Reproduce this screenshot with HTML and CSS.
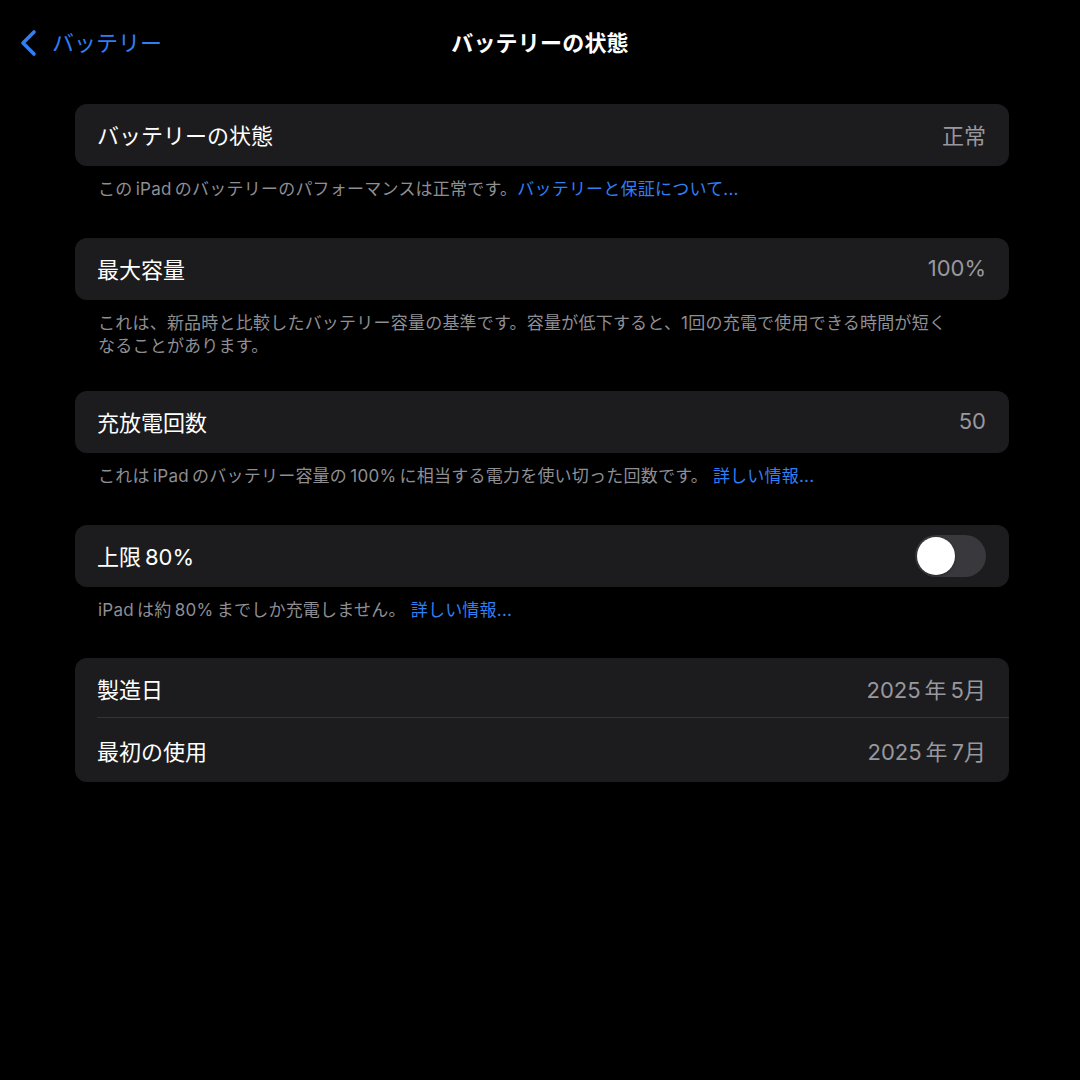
FILE: index.html
```html
<!DOCTYPE html>
<html lang="ja">
<head>
    <meta charset="utf-8">
    <title>バッテリーの状態</title>
    <link rel="stylesheet" href="styles.css">
</head>
<body>
    <div class="nav-bar">
        <a class="back-link" href="#">
            <svg class="chevron" width="20" height="28" viewBox="0 0 20 28">
                <path d="M15 3 L4 14 L15 25" fill="none" stroke="#2f7ff5" stroke-width="3.6" stroke-linecap="round" stroke-linejoin="round"/>
            </svg>
            <span>バッテリー</span>
        </a>
        <div class="nav-title">バッテリーの状態</div>
    </div>

    <div class="content">
        <div class="card">
            <div class="row">
                <span class="row-label">バッテリーの状態</span>
                <span class="row-value">正常</span>
            </div>
        </div>
        <div class="note">この&thinsp;iPad&thinsp;のバッテリーのパフォーマンスは正常です。<a href="#">バッテリーと保証について...</a></div>

        <div class="card">
            <div class="row">
                <span class="row-label">最大容量</span>
                <span class="row-value">100%</span>
            </div>
        </div>
        <div class="note note-tight">これは、新品時と比較したバッテリー容量の基準です。容量が低下すると、1回の充電で使用できる時間が短く<br>なることがあります。</div>

        <div class="card">
            <div class="row">
                <span class="row-label">充放電回数</span>
                <span class="row-value">50</span>
            </div>
        </div>
        <div class="note">これは&thinsp;iPad&thinsp;のバッテリー容量の&thinsp;100%&thinsp;に相当する電力を使い切った回数です。 <a href="#">詳しい情報...</a></div>

        <div class="card">
            <div class="row">
                <span class="row-label">上限&thinsp;80%</span>
                <span class="toggle"><span class="knob"></span></span>
            </div>
        </div>
        <div class="note note-last">iPad&thinsp;は約&thinsp;80%&thinsp;までしか充電しません。 <a href="#">詳しい情報...</a></div>

        <div class="card">
            <div class="row">
                <span class="row-label">製造日</span>
                <span class="row-value">2025&thinsp;年&thinsp;5月</span>
            </div>
            <div class="row row-divided">
                <span class="row-label">最初の使用</span>
                <span class="row-value">2025&thinsp;年&thinsp;7月</span>
            </div>
        </div>
    </div>
</body>
</html>
```

FILE: styles.css
```css
body {
    margin: 0;
    background-color: #000;
    color: #fff;
    font-family: "Inter", "Noto Sans CJK JP", sans-serif;
    width: 1080px;
    height: 1080px;
    overflow: hidden;
}

a {
    color: #2f7ff5;
    text-decoration: none;
}

.nav-bar {
    position: relative;
    height: 86px;
    display: flex;
    align-items: center;
    justify-content: center;
}

.back-link {
    position: absolute; /* sits over the centered title bar */
    left: 19px;
    top: 29px;
    display: flex;
    align-items: center;
    gap: 13px;
    font-size: 22px;
    line-height: 28px;
}

.chevron {
    display: block;
}

.nav-title {
    font-size: 22px;
    font-weight: 700;
    letter-spacing: 0.2px;
    margin-top: -4px;
}

.content {
    padding: 18px 71px 0 75px;
}

.card {
    background-color: #1c1c1e;
    border-radius: 12px;
    overflow: hidden;
}

.row {
    height: 62px;
    display: flex;
    align-items: center;
    justify-content: space-between;
    padding: 0 23px 3px 22px;
    box-sizing: border-box;
    font-size: 22px;
}

.row-divided {
    position: relative;
}

.row-divided::before {
    content: "";
    position: absolute;
    left: 22px;
    right: 0;
    top: -3px;
    height: 1px;
    background-color: #333336;
}

.row-value {
    color: #98989e;
}

.toggle {
    width: 71px;
    height: 42px;
    border-radius: 21px;
    background-color: #39393d;
    display: flex;
    align-items: center;
    padding: 0 2px;
    box-sizing: border-box;
    margin-top: 3px;
}

.knob {
    width: 38px;
    height: 38px;
    border-radius: 50%;
    background-color: #fff;
    box-shadow: 0 1px 3px rgba(0, 0, 0, 0.3);
}

.note {
    color: #8e8e93;
    font-size: 17px;
    letter-spacing: 0.22px;
    line-height: 23px;
    padding: 12px 23px 0 23px;
    margin-bottom: 37px;
}

.note-tight {
    margin-bottom: 33px;
}

.note-last {
    margin-bottom: 36px;
}
```
